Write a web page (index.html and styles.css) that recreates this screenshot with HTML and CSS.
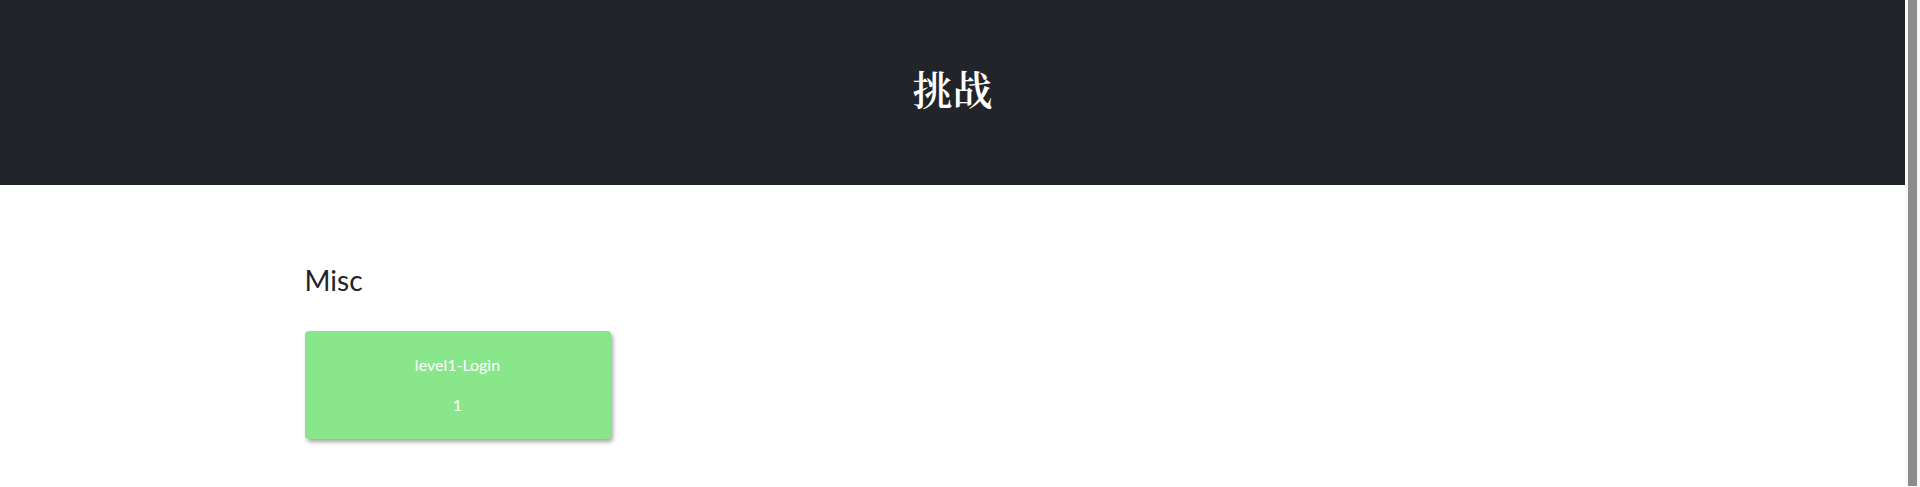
FILE: index.html
```html
<!DOCTYPE html>
<html lang="zh">
<head>
<meta charset="utf-8">
<title>挑战</title>
<link rel="stylesheet" href="styles.css">
</head>
<body>
<div class="page">
  <header class="jumbotron">
    <h1 class="title">挑战</h1>
  </header>
  <main class="container">
    <h3 class="category">Misc</h3>
    <div class="grid">
      <div class="card">
        <p class="card-name">level1-Login</p>
        <p class="card-value">1</p>
      </div>
    </div>
  </main>
</div>
<div class="scrollbar"><div class="thumb"></div></div>
</body>
</html>
```

FILE: styles.css
```css
html, body {
  margin: 0;
  padding: 0;
}
body {
  font-family: Lato, "Noto Sans CJK SC", sans-serif;
  color: #212529;
  background: #fff;
  height: 100vh;
  overflow: hidden;
  display: flex;
}
.page {
  flex: 1;
  min-width: 0;
}
.scrollbar {
  width: 15px;
  flex: none;
  background: #f8f8f8;
  box-sizing: border-box;
  padding: 0 3px 1px 3px;
  display: flex;
}
.thumb {
  flex: 1;
  background: #8c8c8c;
}
.jumbotron {
  background: #212529;
  height: 185px;
  box-sizing: border-box;
  padding-bottom: 10px;
  display: flex;
  align-items: center;
  justify-content: center;
}
.title {
  margin: 0;
  color: #fff;
  font-family: "Noto Serif CJK SC", serif;
  font-size: 40px;
  font-weight: 600;
  line-height: 1.2;
}
.container {
  box-sizing: border-box;
  max-width: 1320px;
  margin: 0 auto;
  padding: 0 12px;
}
.category {
  margin: 79px 0 0;
  font-size: 28px;
  font-weight: 400;
  line-height: 1.2;
}
.grid {
  display: grid;
  grid-template-columns: repeat(4, 1fr);
  column-gap: 24px;
  margin-top: 33px;
}
.card {
  background: #8ae68b;
  border-radius: 4px;
  box-shadow: 2px 3px 4px rgba(0,0,0,0.35);
  height: 108px;
  box-sizing: border-box;
  padding-top: 22px;
  color: #fff;
  text-align: center;
  font-size: 16px;
  line-height: 24px;
}
.card-name {
  margin: 0 0 16px;
}
.card-value {
  margin: 0;
}
```
